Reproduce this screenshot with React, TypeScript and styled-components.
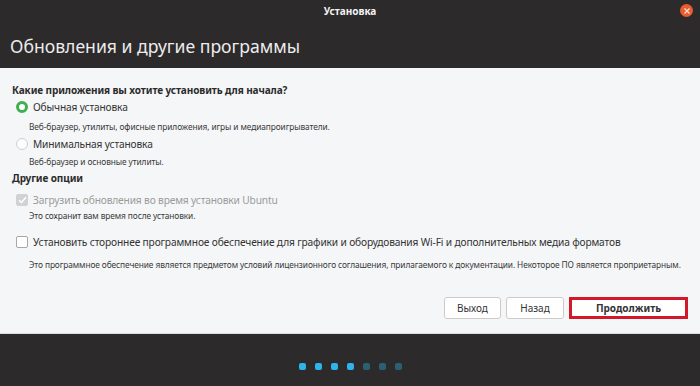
import { createGlobalStyle, styled } from 'styled-components';

const DOTS = [true, true, true, true, false, false, false];

const GlobalStyle = createGlobalStyle`
  html, body {
    margin: 0;
    padding: 0;
    background: #2c2a2a;
  }
  body {
    font-family: 'Noto Sans', 'Open Sans', sans-serif;
  }
`;

const App = () => {
  return (
    <Window>
      <GlobalStyle />
      <TitleBar>
        <WindowTitle>Установка</WindowTitle>
        <CloseButton>
          <svg width="6" height="6" viewBox="0 0 6 6">
            <path d="M0.5 0.5 L5.5 5.5 M5.5 0.5 L0.5 5.5" stroke="#fbe3d6" strokeWidth="1.2" />
          </svg>
        </CloseButton>
      </TitleBar>
      <PageHeader>Обновления и другие программы</PageHeader>
      <Content>
        <SectionTitle>Какие приложения вы хотите установить для начала?</SectionTitle>
        <OptionRow $top={2}>
          <Radio $checked />
          <OptionLabel>Обычная установка</OptionLabel>
        </OptionRow>
        <Hint $top={6}>Веб-браузер, утилиты, офисные приложения, игры и медиапроигрыватели.</Hint>
        <OptionRow $top={3}>
          <Radio />
          <OptionLabel>Минимальная установка</OptionLabel>
        </OptionRow>
        <Hint $top={4}>Веб-браузер и основные утилиты.</Hint>
        <SectionTitle $top={3}>Другие опции</SectionTitle>
        <OptionRow $top={7}>
          <CheckBox $checked $disabled>
            <svg width="9" height="8" viewBox="0 0 9 8">
              <path d="M1 4.2 L3.4 6.5 L8 1.2" fill="none" stroke="#fff" strokeWidth="1.5" />
            </svg>
          </CheckBox>
          <OptionLabel $disabled>Загрузить обновления во время установки Ubuntu</OptionLabel>
        </OptionRow>
        <Hint $top={2}>Это сохранит вам время после установки.</Hint>
        <OptionRow $top={12}>
          <CheckBox />
          <OptionLabel>
            Установить стороннее программное обеспечение для графики и оборудования Wi-Fi и дополнительных медиа форматов
          </OptionLabel>
        </OptionRow>
        <Hint $top={9}>
          Это программное обеспечение является предметом условий лицензионного соглашения, прилагаемого к
          документации. Некоторое ПО является проприетарным.
        </Hint>
        <ButtonRow>
          <Button $width={57}>Выход</Button>
          <Button $width={58}>Назад</Button>
          <Button $width={119} $highlight>
            Продолжить
          </Button>
        </ButtonRow>
      </Content>
      <Footer>
        {DOTS.map((active, i) => (
          <Dot key={i} $active={active} />
        ))}
      </Footer>
    </Window>
  );
};

export default App;

const Window = styled.div`
  width: 700px;
  height: 386px;
  display: flex;
  flex-direction: column;
  background: #2c2a2a;
  overflow: hidden;
`;

const TitleBar = styled.div`
  position: relative;
  height: 22px;
  display: flex;
  align-items: center;
  justify-content: center;
`;

const WindowTitle = styled.span`
  font-family: 'Liberation Sans Narrow', 'Noto Sans', sans-serif;
  font-size: 10px;
  font-weight: 700;
  color: #f2f2f2;
`;

const CloseButton = styled.div`
  position: absolute;
  right: 7px;
  top: 4px;
  width: 13px;
  height: 13px;
  border-radius: 50%;
  background: #e95c2f;
  display: flex;
  align-items: center;
  justify-content: center;
`;

const PageHeader = styled.h1`
  margin: 0;
  height: 46px;
  padding: 3px 0 0 10px;
  display: flex;
  align-items: center;
  font-size: 17.6px;
  font-weight: 400;
  color: #ececec;
  line-height: 1;
  box-sizing: border-box;
`;

const Content = styled.div`
  flex: 1;
  display: flex;
  flex-direction: column;
  background: #f5f6f7;
  border-bottom: 1px solid #dcdcdc;
  padding: 15px 12px 12px 12px;
`;

const SectionTitle = styled.div<{ $top?: number }>`
  margin-top: ${(p) => p.$top ?? 0}px;
  font-size: 10px;
  font-weight: 700;
  color: #2b2b2b;
  line-height: 14px;
  letter-spacing: -0.1px;
`;

const OptionRow = styled.div<{ $top?: number }>`
  margin-top: ${(p) => p.$top ?? 0}px;
  display: flex;
  align-items: center;
  gap: 5px;
  padding-left: 4px;
`;

const Radio = styled.span<{ $checked?: boolean }>`
  width: 12px;
  height: 12px;
  border-radius: 50%;
  box-sizing: border-box;
  flex-shrink: 0;
  background: ${(p) => (p.$checked ? '#fff' : '#fdfdfd')};
  border: ${(p) => (p.$checked ? '3.5px solid #3fb04f' : '1px solid #d3d0cd')};
`;

const CheckBox = styled.span<{ $checked?: boolean; $disabled?: boolean }>`
  width: 12px;
  height: 12px;
  border-radius: 2px;
  box-sizing: border-box;
  flex-shrink: 0;
  display: flex;
  align-items: center;
  justify-content: center;
  background: ${(p) => (p.$disabled ? '#d2d2d2' : '#fff')};
  border: 1px solid ${(p) => (p.$disabled ? '#d2d2d2' : '#aaa7a4')};
`;

const OptionLabel = styled.span<{ $disabled?: boolean }>`
  font-size: 10.2px;
  letter-spacing: -0.15px;
  line-height: 16px;
  color: ${(p) => (p.$disabled ? '#9b9b9b' : '#333')};
  white-space: nowrap;
`;

const Hint = styled.div<{ $top?: number }>`
  margin-top: ${(p) => p.$top ?? 0}px;
  padding-left: 17px;
  font-size: 8.35px;
  letter-spacing: -0.1px;
  line-height: 12px;
  color: #3a3a3a;
  white-space: nowrap;
`;

const ButtonRow = styled.div`
  margin-top: auto;
  display: flex;
  justify-content: flex-end;
  gap: 5px;
  padding-bottom: 2px;
`;

const Button = styled.div<{ $width: number; $highlight?: boolean }>`
  width: ${(p) => p.$width}px;
  height: 22px;
  box-sizing: border-box;
  display: flex;
  align-items: center;
  justify-content: center;
  background: #fff;
  border-radius: ${(p) => (p.$highlight ? '0' : '3px')};
  border: ${(p) => (p.$highlight ? '3px solid #d3182a' : '1px solid #cfcac6')};
  font-size: 10px;
  font-weight: ${(p) => (p.$highlight ? 700 : 400)};
  color: #333;
`;

const Footer = styled.div`
  height: 52px;
  display: flex;
  align-items: center;
  justify-content: center;
  gap: 9px;
  padding-top: 12px;
  box-sizing: border-box;
`;

const Dot = styled.span<{ $active: boolean }>`
  width: 7px;
  height: 7px;
  border-radius: 2px;
  background: ${(p) => (p.$active ? '#2eb4e8' : '#2b6072')};
`;
